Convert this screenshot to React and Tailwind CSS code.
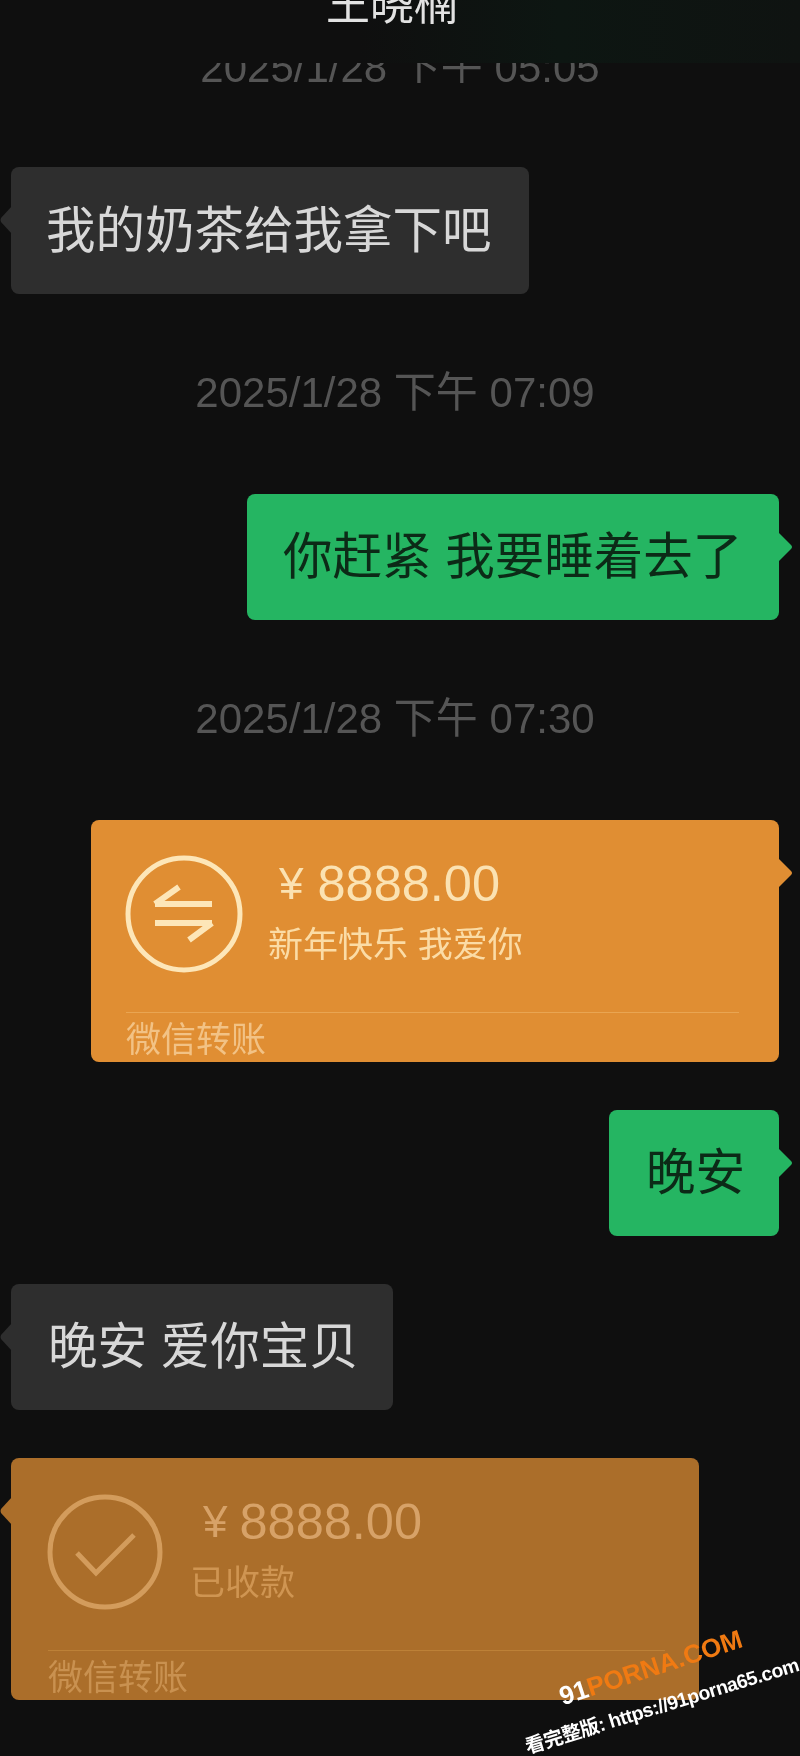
import React from "react";

const font = { fontFamily: '"Liberation Sans", "Noto Sans CJK SC", sans-serif' };

function Tail({ side, color }) {
  if (side === "left") {
    return (
      <svg className="absolute left-[-11px] top-[39px]" width="12" height="28" viewBox="0 0 12 28">
        <path d="M12 0 L1 12 Q0 14 1 16 L12 28 Z" fill={color} />
      </svg>
    );
  }
  return (
    <svg className="absolute right-[-14px] top-[38px]" width="15" height="30" viewBox="0 0 15 30">
      <path d="M0 0 L13 13 Q15 15 13 17 L0 30 Z" fill={color} />
    </svg>
  );
}

function Time({ children, className }) {
  return (
    <div className={"flex h-[50px] items-center justify-center text-[42px] leading-none text-[#555555] " + className}>
      {children}
    </div>
  );
}

function Bubble({ side, color, h, w, tc, pl, className, children }) {
  return (
    <div className={"flex " + (side === "right" ? "justify-end " : "justify-start ") + className}>
      <div className={"relative flex items-center rounded-lg " + h + " " + w + " " + color + " " + pl + " " + tc}>
        <Tail side={side} color={side === "right" ? "#25b562" : "#2e2e2e"} />
        <span className="text-[49.5px] leading-none whitespace-pre">{children}</span>
      </div>
    </div>
  );
}

function Transfer({ side, className, bg, tail, icon, amountColor, subColor, footColor, lineColor, sub, amountPl, subPl, w, rowPl, iconPt, footMl, footPl, footW, gap }) {
  return (
    <div className={"flex " + (side === "right" ? "justify-end " : "justify-start ") + className}>
      <div className={"relative flex h-[242px] flex-col rounded-lg " + w + " " + bg}>
        <Tail side={side} color={tail} />
        <div className={"flex h-[192px] items-start " + rowPl}>
          <div className={"shrink-0 " + iconPt}>{icon}</div>
          <div className="flex flex-col">
            <div className={"mt-[39px] flex h-[50px] items-center text-[50.5px] leading-none " + amountPl + " " + amountColor}>
              <span className={"text-[44px] " + gap}>¥</span>
              <span>8888.00</span>
            </div>
            <div className={"mt-[18px] text-[35px] leading-none whitespace-pre " + subPl + " " + subColor}>{sub}</div>
          </div>
        </div>
        <div className={"h-px " + footW + " " + footMl + " " + lineColor}></div>
        <div className={"pt-[9px] text-[35px] leading-none " + footPl + " " + footColor}>微信转账</div>
      </div>
    </div>
  );
}

export default function App() {
  return (
    <div style={font} className="relative flex h-[1756px] w-[800px] flex-col overflow-hidden bg-[#0f0f0f] blur-[0.7px]">
      <div className="h-[63px] overflow-hidden bg-[linear-gradient(90deg,#0f0f0f_45%,#0d1612_70%,#0f1311_100%)]">
        <div className="mt-[-17px] pr-[16px] text-center text-[44px] leading-none text-[#e2e2e2]">王晓楠</div>
      </div>
      <div className="flex h-[20px] items-end justify-center overflow-hidden text-[42px] leading-none text-[#555555]">
        <span className="mb-[-6px] shrink-0">2025/1/28 下午 05:05</span>
      </div>

      <div className="flex flex-col pl-[11px] pr-[21px]">
        <Bubble side="left" color="bg-[#2e2e2e]" tc="text-[#d8d8d8]" h="h-[127px]" w="w-[518px]" pl="pl-[35px]" className="mt-[84px]">我的奶茶给我拿下吧</Bubble>
        <Time className="mt-[74px]">2025/1/28 下午 07:09</Time>
        <Bubble side="right" color="bg-[#25b562]" tc="text-[#0c2a17]" h="h-[126px]" w="w-[532px]" pl="pl-[36px]" className="mt-[76px]">你赶紧 我要睡着去了</Bubble>
        <Time className="mt-[74px]">2025/1/28 下午 07:30</Time>
        <Transfer
          side="right"
          className="mt-[76px]"
          w="w-[688px]"
          bg="bg-[#e08e33]"
          tail="#e08e33"
          rowPl="pl-[34px]"
          iconPt="pt-[35px]"
          amountPl="pl-[36px]"
          subPl="pl-[25px]"
          gap="mr-[14px]"
          amountColor="text-[#fbe2b2]"
          subColor="text-[#fbdca6]"
          footColor="text-[#f2c285]"
          lineColor="bg-[#e9a552]"
          footMl="ml-[35px]"
          footPl="pl-[35px]"
          footW="w-[613px]"
          sub="新年快乐 我爱你"
          icon={
            <svg width="118" height="118" viewBox="0 0 118 118" fill="none" stroke="#fde6b8">
              <circle cx="59" cy="59" r="56" strokeWidth="5" />
              <path d="M30 49 H87 M30 49 L54 32" strokeWidth="6" />
              <path d="M30 68 H87 M87 68 L64 85" strokeWidth="6" />
            </svg>
          }
        />
        <Bubble side="right" color="bg-[#25b562]" tc="text-[#0c2a17]" h="h-[126px]" w="w-[170px]" pl="pl-[37px]" className="mt-[48px]">晚安</Bubble>
        <Bubble side="left" color="bg-[#2e2e2e]" tc="text-[#d8d8d8]" h="h-[126px]" w="w-[382px]" pl="pl-[37px]" className="mt-[48px]">晚安 爱你宝贝</Bubble>
        <Transfer
          side="left"
          className="mt-[48px]"
          w="w-[688px]"
          bg="bg-[#ab6e2a]"
          tail="#ab6e2a"
          rowPl="pl-[36px]"
          iconPt="pt-[36px]"
          amountPl="pl-[40px]"
          subPl="pl-[27px]"
          gap="mr-[12px]"
          amountColor="text-[#d7a268]"
          subColor="text-[#cf9552]"
          footColor="text-[#c99150]"
          lineColor="bg-[#bd8137]"
          footMl="ml-[37px]"
          footPl="pl-[37px]"
          footW="w-[617px]"
          sub="已收款"
          icon={
            <svg width="116" height="116" viewBox="0 0 116 116" fill="none" stroke="#d39c5c">
              <circle cx="58" cy="58" r="55" strokeWidth="5" />
              <path d="M30 59 L49 79 L87 41" strokeWidth="5" />
            </svg>
          }
        />
      </div>

      <div className="absolute left-[560px] top-[1684px] origin-left rotate-[-18deg] whitespace-nowrap text-[26px] font-bold leading-none">
        <span className="text-white">91</span>
        <span className="text-[#f07a12]">PORNA.COM</span>
      </div>
      <div className="absolute left-[526px] top-[1738px] origin-left rotate-[-17deg] whitespace-nowrap text-[19.5px] font-bold leading-none tracking-tight text-white">
        看完整版: https://91porna65.com
      </div>
    </div>
  );
}
